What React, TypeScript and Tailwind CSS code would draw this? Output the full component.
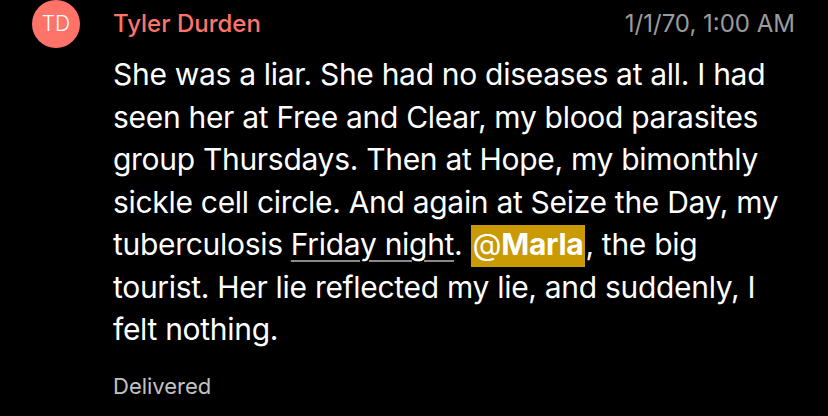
import React from "react";

export default function App() {
  return (
    <div
      className="w-[828px] h-[416px] bg-black overflow-hidden flex"
      style={{ fontFamily: "Inter, 'Noto Sans', sans-serif" }}
    >
      <div className="w-[113px] shrink-0 flex justify-start pl-[32px]">
        <div className="w-[48px] h-[48px] rounded-full bg-[#ff7369] flex items-center justify-center text-white text-[21px] font-light">
          TD
        </div>
      </div>
      <div className="flex-1 flex flex-col pr-[33px]">
        <div className="flex items-center justify-between h-[48px]">
          <span className="text-[#ff7369] text-[24px] font-medium">Tyler Durden</span>
          <span className="text-[#9b9b9b] text-[24px]">1/1/70, 1:00 AM</span>
        </div>
        <p className="text-white text-[30px] leading-[42.5px] mt-[5px] whitespace-nowrap tracking-[-0.3px]">
          She was a liar. She had no diseases at all. I had
          <br />
          seen her at Free and Clear, my blood parasites
          <br />
          group Thursdays. Then at Hope, my bimonthly
          <br />
          sickle cell circle. And again at Seize the Day, my
          <br />
          tuberculosis{" "}
          <span className="underline decoration-[#8a8a8a] decoration-2 underline-offset-[5px]">
            Friday night
          </span>
          .{" "}
          <span className="bg-[#ca9a04] px-[2px] pt-[1px] pb-[5px]">
            @<span className="font-bold">Marla</span>
          </span>
          , the big
          <br />
          tourist. Her lie reflected my lie, and suddenly, I
          <br />
          felt nothing.
        </p>
        <div className="text-[#c2c2c2] text-[22px] leading-[28px] mt-[21px]">Delivered</div>
      </div>
    </div>
  );
}
